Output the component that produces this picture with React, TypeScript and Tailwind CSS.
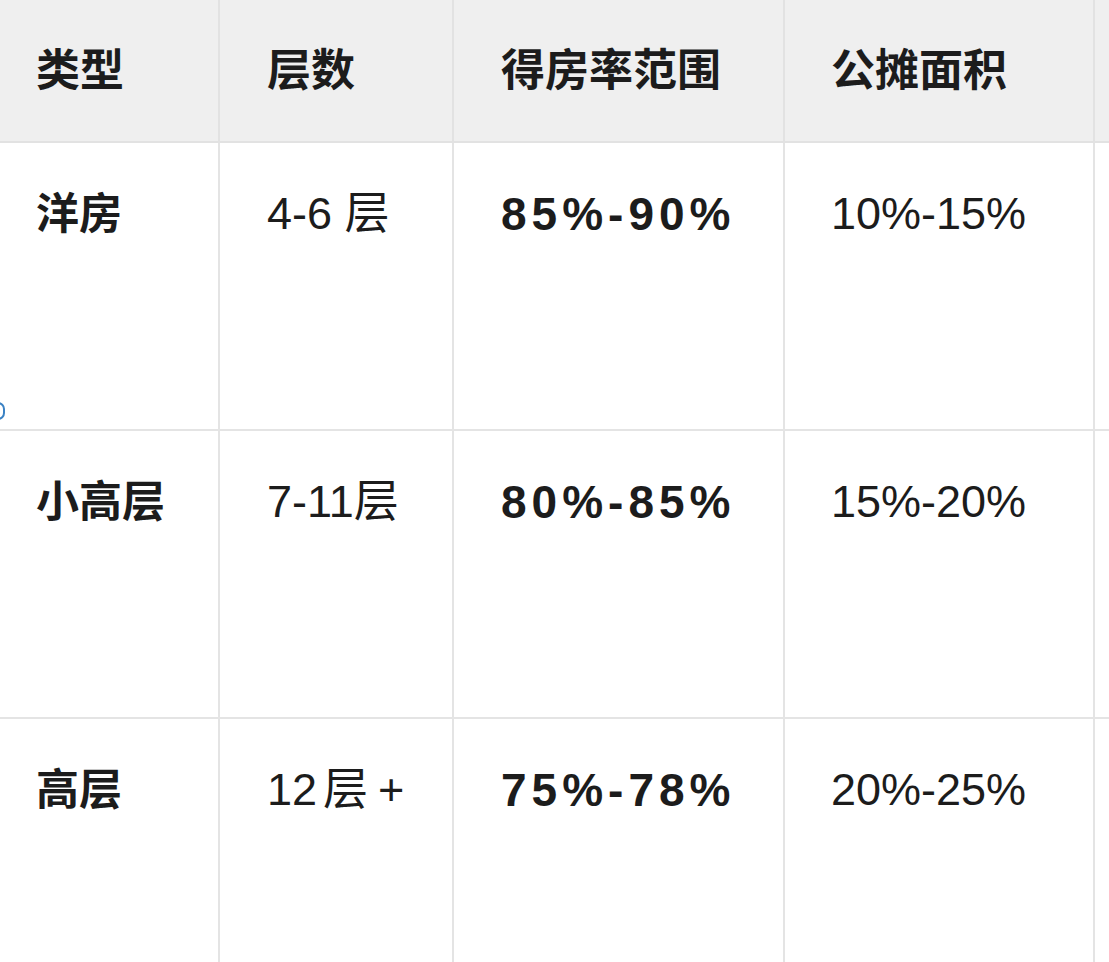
import React from "react";

const font = { fontFamily: '"Liberation Sans", "Noto Sans CJK SC", sans-serif' };

const rows: [string, React.ReactNode, string, string][] = [
  ["洋房", "4-6 层", "85%-90%", "10%-15%"],
  ["小高层", "7-11层", "80%-85%", "15%-20%"],
  [
    "高层",
    <>
      12<span className="ml-[6px]">层</span>
      <span className="ml-[10px]">+</span>
    </>,
    "75%-78%",
    "20%-25%",
  ],
];

const colW = ["w-[220px]", "w-[234px]", "w-[331px]", "w-[310px]"];
const pad = ["pl-[36px]", "pl-[47px]", "pl-[47px]", "pl-[46px]"];

export default function App() {
  return (
    <div className="relative w-[1109px] h-[962px] overflow-hidden bg-white text-[#1c1c1c]" style={font}>
      <div className="flex flex-col w-[1200px]">
        <div className="flex h-[143px] bg-[#efefef] border-b-2 border-[#e2e2e2]">
          {["类型", "层数", "得房率范围", "公摊面积"].map((h, i) => (
            <div
              key={h}
              className={`${colW[i]} ${pad[i]} shrink-0 flex items-center border-r-2 border-[#e2e2e2] text-[44px] font-bold`}
            >
              {h}
            </div>
          ))}
          <div className="flex-1" />
        </div>
        {rows.map((r) => (
          <div key={r[0]} className="flex h-[288px] border-b-2 border-[#e4e4e4]">
            <div className={`${colW[0]} ${pad[0]} shrink-0 pt-[44px] border-r-2 border-[#e4e4e4] text-[43px] font-bold leading-[54px]`}>
              {r[0]}
            </div>
            <div className={`${colW[1]} ${pad[1]} shrink-0 pt-[44px] border-r-2 border-[#e4e4e4] text-[45px] leading-[54px]`}>
              {r[1]}
            </div>
            <div className={`${colW[2]} ${pad[2]} shrink-0 pt-[44px] border-r-2 border-[#e4e4e4] text-[46px] font-bold leading-[54px] tracking-[5px]`}>
              {r[2]}
            </div>
            <div className={`${colW[3]} ${pad[3]} shrink-0 pt-[44px] border-r-2 border-[#e4e4e4] text-[45px] leading-[54px]`}>
              {r[3]}
            </div>
            <div className="flex-1" />
          </div>
        ))}
      </div>
      <div className="absolute left-[-9px] top-[402px] w-[14px] h-[18px] rounded-full border-2 border-[#3b82c4]" />
    </div>
  );
}
